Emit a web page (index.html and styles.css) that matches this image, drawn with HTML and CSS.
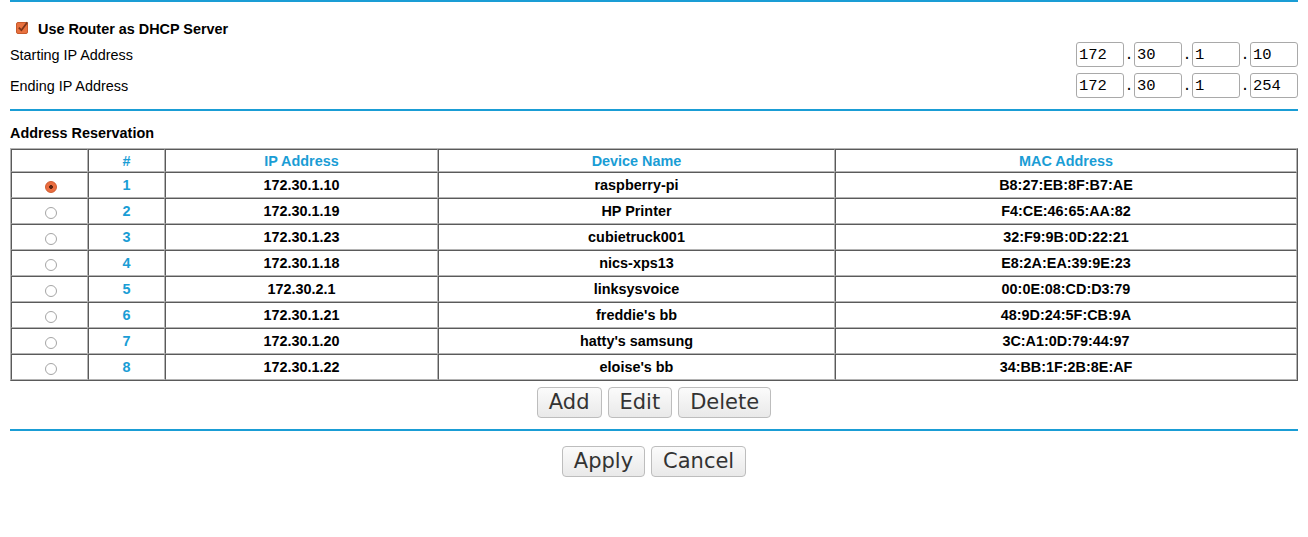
FILE: index.html
```html
<!DOCTYPE html>
<html>
<head>
<meta charset="utf-8">
<link rel="stylesheet" href="styles.css">
</head>
<body>
<div class="rule rule-top"></div>
<div class="toggle-row">
  <span class="checkbox"><svg width="14" height="14" viewBox="0 0 14 14"><rect x="0.5" y="2.5" width="11" height="11" rx="1.5" fill="#e8713f" stroke="#c75a2c"/><path d="M2.8 7.6 L5.4 10.2 L11.4 2.2" fill="none" stroke="#7c3519" stroke-width="1.8"/></svg></span>
  <span class="toggle-label">Use Router as DHCP Server</span>
</div>
<div class="ip-row">
  <span class="ip-label">Starting IP Address</span>
  <div class="ip-fields">
    <input class="ip-box" value="172"><span class="ip-dot">.</span><input class="ip-box" value="30"><span class="ip-dot">.</span><input class="ip-box" value="1"><span class="ip-dot">.</span><input class="ip-box" value="10">
  </div>
</div>
<div class="ip-row ip-row-second">
  <span class="ip-label">Ending IP Address</span>
  <div class="ip-fields">
    <input class="ip-box" value="172"><span class="ip-dot">.</span><input class="ip-box" value="30"><span class="ip-dot">.</span><input class="ip-box" value="1"><span class="ip-dot">.</span><input class="ip-box" value="254">
  </div>
</div>
<div class="rule rule-mid"></div>
<div class="section-title">Address Reservation</div>
<table class="res-table">
  <colgroup>
    <col class="c-sel"><col class="c-num"><col class="c-ip"><col class="c-name"><col class="c-mac">
  </colgroup>
  <thead>
    <tr class="head-row"><th></th><th>#</th><th>IP Address</th><th>Device Name</th><th>MAC Address</th></tr>
  </thead>
  <tbody>
    <tr><td class="sel"><span class="radio checked"></span></td><td class="num">1</td><td>172.30.1.10</td><td>raspberry-pi</td><td>B8:27:EB:8F:B7:AE</td></tr>
    <tr><td class="sel"><span class="radio"></span></td><td class="num">2</td><td>172.30.1.19</td><td>HP Printer</td><td>F4:CE:46:65:AA:82</td></tr>
    <tr><td class="sel"><span class="radio"></span></td><td class="num">3</td><td>172.30.1.23</td><td>cubietruck001</td><td>32:F9:9B:0D:22:21</td></tr>
    <tr><td class="sel"><span class="radio"></span></td><td class="num">4</td><td>172.30.1.18</td><td>nics-xps13</td><td>E8:2A:EA:39:9E:23</td></tr>
    <tr><td class="sel"><span class="radio"></span></td><td class="num">5</td><td>172.30.2.1</td><td>linksysvoice</td><td>00:0E:08:CD:D3:79</td></tr>
    <tr><td class="sel"><span class="radio"></span></td><td class="num">6</td><td>172.30.1.21</td><td>freddie's bb</td><td>48:9D:24:5F:CB:9A</td></tr>
    <tr><td class="sel"><span class="radio"></span></td><td class="num">7</td><td>172.30.1.20</td><td>hatty's samsung</td><td>3C:A1:0D:79:44:97</td></tr>
    <tr><td class="sel"><span class="radio"></span></td><td class="num">8</td><td>172.30.1.22</td><td>eloise's bb</td><td>34:BB:1F:2B:8E:AF</td></tr>
  </tbody>
</table>
<div class="btn-row btn-row-table">
  <button class="btn">Add</button><button class="btn">Edit</button><button class="btn">Delete</button>
</div>
<div class="rule rule-bottom"></div>
<div class="btn-row btn-row-apply">
  <button class="btn">Apply</button><button class="btn">Cancel</button>
</div>
</body>
</html>
```
FILE: styles.css
```css
html, body {
  background: #ffffff;
}
body {
  margin: 0 10px;
  font-family: "Liberation Sans", Arial, sans-serif;
  font-size: 14.4px;
  color: #000;
}
.rule {
  height: 2px;
  background: #1a9dd5;
}
.toggle-row {
  display: flex;
  align-items: center;
  height: 20px;
  margin-top: 17px;
  padding-left: 6px;
}
.checkbox {
  display: flex;
  width: 14px;
  height: 14px;
  margin-top: -4px;
}
.toggle-label {
  font-weight: bold;
  margin-left: 8px;
}
.ip-row {
  display: flex;
  align-items: center;
  justify-content: space-between;
  height: 25px;
  margin-top: 3px;
}
.ip-row-second {
  margin-top: 6px;
}
.ip-fields {
  display: flex;
  align-items: center;
}
.ip-box {
  box-sizing: border-box;
  width: 48px;
  height: 25px;
  margin: 0;
  padding: 0 2px;
  border: 1px solid #a9a9a9;
  border-radius: 3px;
  background: #fff;
  font-family: "Liberation Mono", "DejaVu Sans Mono", monospace;
  font-size: 15.5px;
  color: #000;
}
.ip-dot {
  width: 10px;
  text-align: center;
  font-family: "Liberation Mono", monospace;
  font-size: 15px;
  padding-top: 2px;
}
.rule-mid {
  margin-top: 11px;
}
.section-title {
  font-weight: bold;
  height: 20px;
  line-height: 20px;
  margin-top: 12px;
}
.res-table {
  width: 100%;
  margin-top: 5px;
  border-collapse: separate;
  border-spacing: 0;
  border-style: solid;
  border-width: 1px;
  border-color: #b4b4b4 #5a5a5a #5a5a5a #b4b4b4;
}
.c-sel { width: 77px; }
.c-num { width: 77px; }
.c-ip { width: 273px; }
.c-name { width: 397px; }
.c-mac { width: auto; }
.res-table th,
.res-table td {
  box-sizing: border-box;
  padding: 0;
  text-align: center;
  font-weight: bold;
  border-style: solid;
  border-width: 1px;
  border-color: #5a5a5a #b4b4b4 #b4b4b4 #5a5a5a;
}
.res-table th {
  height: 23px;
  color: #1a9dd5;
}
.res-table td {
  height: 26px;
}
.res-table td.num {
  color: #1a9dd5;
}
.res-table td.sel {
  padding-left: 2px;
}
.radio {
  display: inline-block;
  box-sizing: border-box;
  width: 12px;
  height: 12px;
  border-radius: 50%;
  border: 1px solid #a5a5a5;
  background: #fff;
  vertical-align: middle;
  margin-top: 1px;
}
.radio.checked {
  border-color: #cf5a2e;
  background: radial-gradient(circle, #5b2411 0, #5b2411 1.6px, #ea6d40 2.2px, #ea6d40 100%);
}
.btn-row {
  display: flex;
  justify-content: center;
  gap: 6px;
}
.btn-row-table {
  margin-top: 6px;
}
.btn-row-apply {
  margin-top: 15px;
}
.btn {
  box-sizing: border-box;
  height: 31px;
  margin: 0;
  padding: 0 11px;
  border: 1px solid #bdbdbd;
  border-radius: 4px;
  background: linear-gradient(#fbfbfb, #e9e9e9);
  color: #333333;
  font-family: "DejaVu Sans", sans-serif;
  font-size: 21px;
  line-height: 1;
}
.rule-bottom {
  margin-top: 11px;
}
```
